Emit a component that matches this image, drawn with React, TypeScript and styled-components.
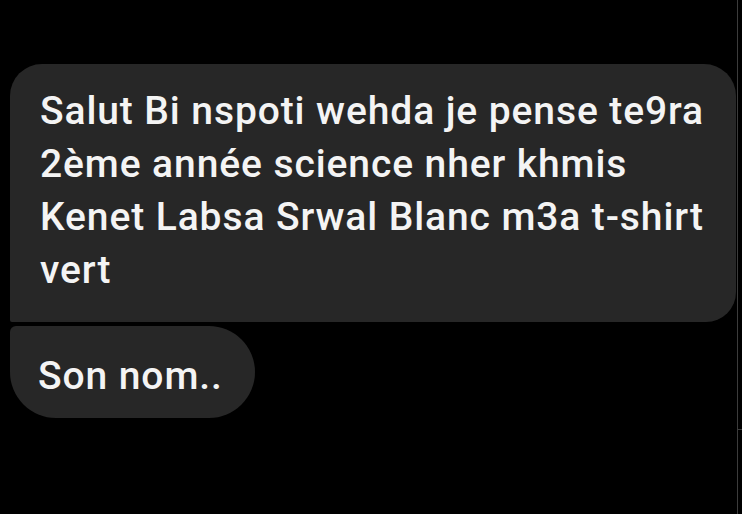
import React from "react";
import styled, { createGlobalStyle } from "styled-components";

const Global = createGlobalStyle`
  html, body { margin: 0; padding: 0; background: #000; }
  body { width: 742px; height: 514px; overflow: hidden; font-family: Roboto, "Liberation Sans", sans-serif; }
`;

const Screen = styled.div`
  display: flex;
  width: 742px;
  height: 514px;
  background: #000;
`;

const Thread = styled.div`
  width: 737px;
  display: flex;
  flex-direction: column;
  align-items: flex-start;
  gap: 4px;
  padding: 64px 0 0 10px;
  box-sizing: border-box;
`;

const Edge = styled.div`
  flex: 1;
  border-left: 1px solid #3c3c3c;
  display: flex;
  flex-direction: column;
`;

const EdgeTop = styled.div`
  height: 429px;
  border-bottom: 1px solid #3c3c3c;
`;

const Bubble = styled.div<{ $wide?: boolean }>`
  background: #272727;
  color: #f4f4f4;
  font-family: Roboto, "Liberation Sans", sans-serif;
  font-size: 39px;
  font-weight: 500;
  letter-spacing: 0.9px;
  line-height: 53px;
  box-sizing: border-box;
  white-space: nowrap;
  ${(p) =>
    p.$wide
      ? `
    width: 726px;
    padding: 21px 20px 25px 30px;
    border-radius: 32px 32px 30px 2px;
  `
      : `
    height: 92px;
    padding: 24px 32px 0 28px;
    border-radius: 6px 46px 46px 46px;
  `}
`;

export default function App() {
  return (
    <>
      <Global />
      <Screen>
        <Thread>
          <Bubble $wide>
            Salut Bi nspoti wehda je pense te9ra
            <br />
            2ème année science nher khmis
            <br />
            Kenet Labsa Srwal Blanc m3a t-shirt
            <br />
            vert
          </Bubble>
          <Bubble>Son nom..</Bubble>
        </Thread>
        <Edge>
          <EdgeTop />
        </Edge>
      </Screen>
    </>
  );
}
